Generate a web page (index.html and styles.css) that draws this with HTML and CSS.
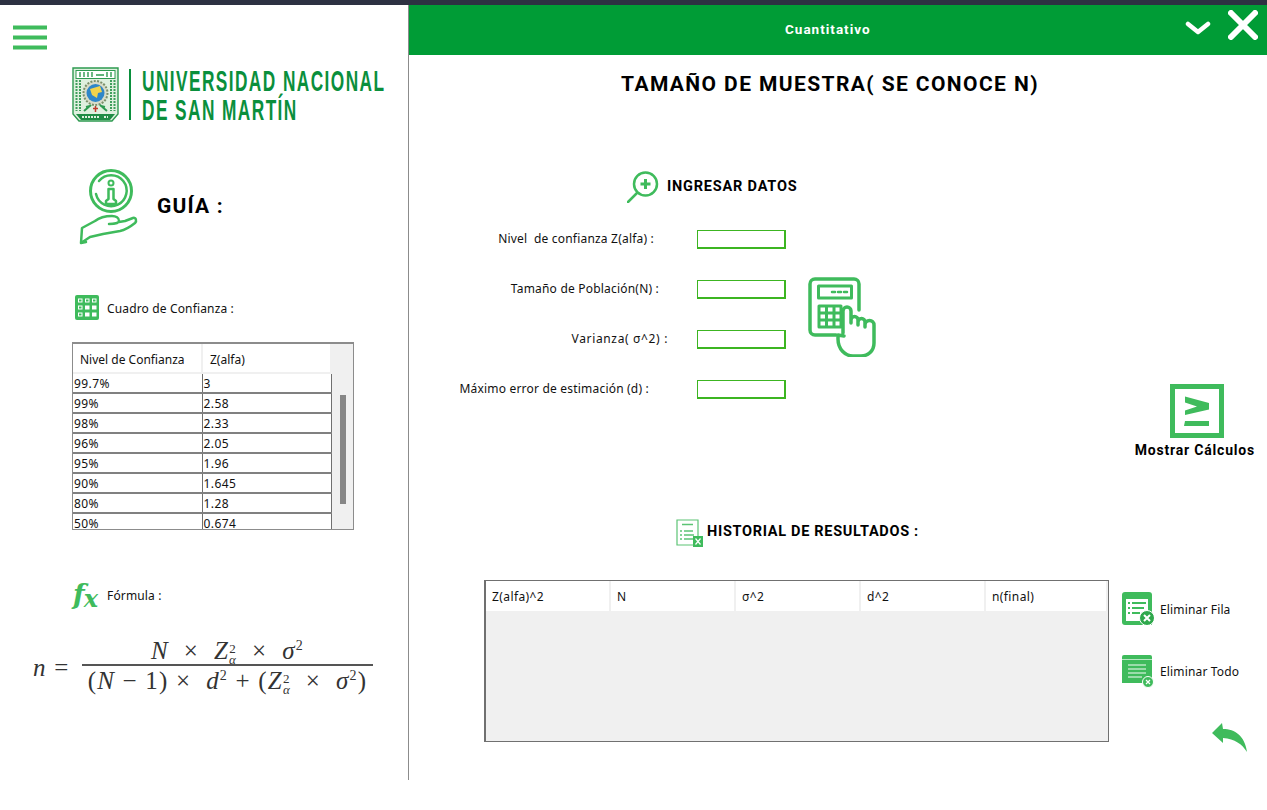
FILE: index.html
```html
<!DOCTYPE html>
<html lang="es">
<head>
    <meta charset="UTF-8">
    <meta name="viewport" content="width=device-width, initial-scale=1.0">
    <title>Cuantitativo</title>
    <link rel="stylesheet" href="styles.css">
</head>
<body>

<div class="top-strip"></div>

<div class="app">
    <aside class="sidebar">
        <svg class="menu-icon" viewBox="0 0 34 25" width="34" height="25">
            <rect y="0.500" width="34" height="4" fill="#3fbb5c"/>
            <rect y="10.500" width="34" height="4" fill="#3fbb5c"/>
            <rect y="20.500" width="34" height="4" fill="#3fbb5c"/>
        </svg>

        <div class="logo">
            <svg class="logo-shield" viewBox="0 0 47 55" width="47" height="55">
                <path d="M1 1H46V47L40 54H7L1 47Z" fill="#dff0df" stroke="#2e9a50" stroke-width="1.400"/>
                <rect x="4" y="3.500" width="39" height="8" fill="#fff" stroke="#2e9a50"/>
                <path d="M8 5v5M12 5v5M16 5v5M20 5v5M24 8h8M35 5v5M39 5v5" stroke="#2e9a50" stroke-width="1.400"/>
                <path d="M4.500 13v31M8 13v31M39 13v31M42.500 13v31" stroke="#3f9e5c" stroke-width="2" stroke-dasharray="2 1"/>
                <circle cx="23.500" cy="26" r="12" fill="#d8dcc8" stroke="#7b8f6a" stroke-width="2" stroke-dasharray="2 1.400"/>
                <circle cx="23.500" cy="26" r="9" fill="#2f86c8"/>
                <path d="M18 22l10-3 2 6-4 1-1 5-5-3z" fill="#f2d34a"/>
                <path d="M12 44l7-6M35 44l-7-6M14 40l4-1M33 40l-4-1" stroke="#2e9a50" stroke-width="2"/>
                <path d="M23.500 39v6M21 41.500h5" stroke="#c0392b" stroke-width="1.500"/>
                <path d="M4 47H43L38 53H9Z" fill="#1f8c45"/>
                <path d="M10 50h17M32 50h4" stroke="#dff0df" stroke-width="2" stroke-dasharray="2 1"/>
            </svg>
            <span class="logo-rule"></span>
            <div class="logo-text">
                <div class="logo-line">UNIVERSIDAD NACIONAL</div>
                <div class="logo-line">DE SAN MARTÍN</div>
            </div>
        </div>

        <div class="guide">
            <svg viewBox="0 0 60 76" width="60" height="76" fill="none" stroke="#3fbb5c" stroke-linecap="round" stroke-linejoin="round">
                <circle cx="33" cy="22" r="20.500" stroke-width="3"/>
                <path d="M21 12a15.500 15.500 0 1 1-3 13" stroke-width="2.500"/>
                <circle cx="33" cy="14" r="2.500" stroke-width="2"/>
                <path d="M30.500 20h5v10l2.500 2v3H28v-3l2.500-2z" stroke-width="2.500"/>
                <path d="M3 74L4 59 17 52C22 48 28 47 34 47 38 47 41 49 41 52 41 54 36 55 31 55M41 53L47 52 55 49C58 48 59 52 57 54 52 58 47 61 42 62L25 65 12 68 3 74M3 74l5-1" stroke-width="2.500"/>
            </svg>
            <span class="guide-title">GUÍA :</span>
        </div>

        <div class="caption caption-table">
            <svg viewBox="0 0 24 25" width="24" height="25">
                <rect width="24" height="25" rx="2" fill="#3fbb5c"/>
                <g fill="#fff">
                    <rect x="3" y="3.500" width="4.500" height="4"/><rect x="10" y="3.500" width="4.500" height="4"/><rect x="17" y="3.500" width="4.500" height="4"/>
                    <rect x="3" y="10.500" width="4.500" height="4"/><rect x="10" y="10.500" width="4.500" height="4"/><rect x="17" y="10.500" width="4.500" height="4"/>
                    <rect x="3" y="17.500" width="4.500" height="4"/><rect x="10" y="17.500" width="4.500" height="4"/><rect x="17" y="17.500" width="4.500" height="4"/>
                </g>
                <g fill="#3fbb5c">
                    <rect x="4" y="4.500" width="2.500" height="2"/><rect x="11" y="4.500" width="2.500" height="2"/><rect x="18" y="4.500" width="2.500" height="2"/>
                    <rect x="4" y="11.500" width="2.500" height="2"/><rect x="4" y="18.500" width="2.500" height="2"/>
                </g>
            </svg>
            <span class="caption-text">Cuadro de Confianza :</span>
        </div>

        <div class="conf-box">
            <div class="conf-scroll">
                <table class="conf-table">
                    <thead>
                        <tr><th>Nivel de Confianza</th><th>Z(alfa)</th></tr>
                    </thead>
                    <tbody>
                        <tr><td>99.7%</td><td>3</td></tr>
                        <tr><td>99%</td><td>2.58</td></tr>
                        <tr><td>98%</td><td>2.33</td></tr>
                        <tr><td>96%</td><td>2.05</td></tr>
                        <tr><td>95%</td><td>1.96</td></tr>
                        <tr><td>90%</td><td>1.645</td></tr>
                        <tr><td>80%</td><td>1.28</td></tr>
                        <tr><td>50%</td><td>0.674</td></tr>
                    </tbody>
                </table>
            </div>
            <div class="conf-bar"><div class="conf-thumb"></div></div>
        </div>

        <div class="caption caption-formula">
            <span class="fx-icon">f<sub>x</sub></span>
            <span>Fórmula :</span>
        </div>

        <div class="formula">
            <span class="formula-left"><i>n</i> =</span>
            <div class="fraction">
                <div class="numer"><i>N</i> &nbsp;× &nbsp;<i>Z</i><span class="supsub"><span>2</span><i>α</i></span> &nbsp;× &nbsp;<i>σ</i><sup>2</sup></div>
                <div class="denom">(<i>N</i> − 1) × &nbsp;<i>d</i><sup>2</sup> + (<i>Z</i><span class="supsub"><span>2</span><i>α</i></span> &nbsp;× &nbsp;<i>σ</i><sup>2</sup>)</div>
            </div>
        </div>
    </aside>

    <main class="main">
        <header class="main-header">
            <span class="main-header-title">Cuantitativo</span>
            <svg class="icon-chevron" viewBox="0 0 26 14" width="26" height="14" fill="none" stroke="#fff" stroke-width="4.500" stroke-linecap="round" stroke-linejoin="round">
                <path d="M3 3l10 8 10-8"/>
            </svg>
            <svg class="icon-close" viewBox="0 0 30 30" width="30" height="30" fill="none" stroke="#fff" stroke-width="6" stroke-linecap="round">
                <path d="M3 3l24 24M27 3L3 27"/>
            </svg>
        </header>

        <h1 class="page-title">TAMAÑO DE MUESTRA( SE CONOCE N)</h1>

        <div class="section-head head-data">
            <svg viewBox="0 0 32 32" width="32" height="32" fill="none" stroke="#3fbb5c" stroke-linecap="round">
                <circle cx="18.500" cy="13" r="11.500" stroke-width="2.500"/>
                <path d="M10 22L1 31" stroke-width="2.500"/>
                <path d="M18.500 8v10M13.500 13h10" stroke-width="3" stroke-linecap="butt"/>
            </svg>
            <span>INGRESAR DATOS</span>
        </div>

        <div class="data-area">
            <form class="data-form">
                <div class="field field-1"><label>Nivel&nbsp; de confianza Z(alfa) :</label><input type="text"></div>
                <div class="field field-2"><label>Tamaño de Población(N) :</label><input type="text"></div>
                <div class="field field-3"><label>Varianza( σ^2) :</label><input type="text"></div>
                <div class="field field-4"><label>Máximo error de estimación (d) :</label><input type="text"></div>
            </form>

            <svg class="calc-icon" viewBox="0 0 68 80" width="68" height="80" fill="none" stroke="#3fbb5c" stroke-linejoin="round" stroke-linecap="round">
                <path d="M28 58H7a5 5 0 0 1-5-5V7a5 5 0 0 1 5-5h39a5 5 0 0 1 5 5v26" stroke-width="3.500"/>
                <rect x="10.500" y="9" width="33" height="12" stroke-width="3"/>
                <path d="M24 15h3M30 15h3M36 15h3" stroke-width="2.500"/>
                <path d="M11 29h22v21H11zM18.500 29v21M26 29v21M11 36h22M11 43h22" stroke-width="3"/>
                <path d="M35 56V34a4 4 0 0 1 8 0v12-3a3.500 3.500 0 0 1 7 0v5-3a3.500 3.500 0 0 1 7 0v5-2a4 4 0 0 1 9 0v18c0 8-6 13-13 13h-8c-8 0-15-7-15-17v-4l6 1" fill="#fff" stroke-width="3.500"/>
            </svg>

            <div class="show-calc">
                <svg viewBox="0 0 54 54" width="54" height="54">
                    <rect x="2.500" y="2.500" width="49" height="49" fill="none" stroke="#3fbb5c" stroke-width="5"/>
                    <path d="M15 12.500l24 6.500v6.500l-24 5.500v-4.500l12-4-12-4z" fill="#3fbb5c"/>
                    <path d="M15 37h24v5H14z" fill="#3fbb5c"/>
                </svg>
                <span>Mostrar Cálculos</span>
            </div>
        </div>

        <div class="section-head head-history">
            <svg viewBox="0 0 27 29" width="27" height="29" fill="none" stroke="#5cc475">
                <path d="M1 1h21v25H1z" fill="#fff" stroke-width="1.200"/>
                <path d="M6 5.500h11M4 12h2M8 12h9M4 16h2M8 16h10M4 20h2M8 20h10" stroke-width="1.500"/>
                <rect x="17" y="17" width="10" height="11" fill="#3fbb5c" stroke="none"/>
                <path d="M19.500 19.500l5 6M24.500 19.500l-5 6" stroke="#fff" stroke-width="1.200"/>
            </svg>
            <span>HISTORIAL DE RESULTADOS :</span>
        </div>

        <div class="results-area">
            <div class="results-box">
                <div class="results-head">
                    <div>Z(alfa)^2</div>
                    <div>N</div>
                    <div>σ^2</div>
                    <div>d^2</div>
                    <div>n(final)</div>
                </div>
            </div>

            <div class="results-actions">
                <div class="action action-row">
                    <svg viewBox="0 0 32 33" width="32" height="33">
                        <path d="M3 0h24a3 3 0 0 1 3 3v30H3a3 3 0 0 1-3-3V3a3 3 0 0 1 3-3z" fill="#3fbb5c"/>
                        <path d="M4 7h22v22H4z" fill="#fff"/>
                        <path d="M10 11h14M10 16h12M10 21h8M6 11h2M6 16h2M6 21h2" stroke="#3fbb5c" stroke-width="2"/>
                        <circle cx="25" cy="26" r="7.500" fill="#2fa84c" stroke="#fff"/>
                        <path d="M22 23l6 6M28 23l-6 6" stroke="#fff" stroke-width="2"/>
                    </svg>
                    <span>Eliminar Fila</span>
                </div>
                <div class="action action-all">
                    <svg viewBox="0 0 32 33" width="32" height="33">
                        <path d="M2 0h26a2 2 0 0 1 2 2v26H0V2a2 2 0 0 1 2-2z" fill="#3fbb5c"/>
                        <path d="M6 10h18M6 14h18M6 18h18M6 22h14" stroke="#b9e8c4" stroke-width="1.600"/>
                        <rect y="4" width="30" height="1" fill="#b9e8c4"/>
                        <circle cx="26" cy="27" r="5.500" fill="#3fbb5c" stroke="#fff"/>
                        <path d="M24 25l4 4M28 25l-4 4" stroke="#fff" stroke-width="1.200"/>
                    </svg>
                    <span>Eliminar Todo</span>
                </div>
                <svg class="back-icon" viewBox="0 0 35 30" width="35" height="30">
                    <path d="M0 11L10 1l1 6C23 7 33 14 35 30 30 22 23 17 11 16l0 5z" fill="#3fbb5c"/>
                </svg>
            </div>
        </div>
    </main>
</div>

</body>
</html>
```

FILE: styles.css
```css
/* Algemeen */
* {
    box-sizing: border-box;
}

body {
    margin: 0;
    height: 810px;
    overflow: hidden;
    background-color: white;
    color: #111;
    font-family: "Noto Sans", sans-serif;
    font-size: 12px;
}

.top-strip {
    height: 5px;
    background-color: #2d3142;
}

.app {
    display: flex;
    height: 775px;
}

/* Zijbalk */
.sidebar {
    width: 409px;
    flex-shrink: 0;
    border-right: 1px solid #8c8c8c;
}

.menu-icon {
    display: block;
    margin: 20px 0 0 13px;
}

.logo {
    display: flex;
    align-items: center;
    height: 55px;
    margin: 17px 0 0 72px;
}

.logo-shield {
    flex-shrink: 0;
}

.logo-rule {
    flex-shrink: 0;
    width: 2px;
    height: 51px;
    margin: 0 11px 0 10px;
    background-color: #0a8f3c;
}

.logo-text {
    width: 242px;
    flex-shrink: 0;
    color: #0a8f3c;
    font-family: "Liberation Sans", sans-serif;
    font-size: 30px;
    font-weight: bold;
    line-height: 29px;
    letter-spacing: 2.5px;
    white-space: nowrap;
}

/* smalle letters van het logo */
.logo-line {
    transform: scaleX(0.575);
    transform-origin: left center;
}

.guide {
    display: flex;
    align-items: center;
    gap: 20px;
    margin: 47px 0 0 78px;
}

.guide svg {
    display: block;
}

.guide-title {
    margin: 0 0 2px -1px;
    color: #000;
    font-family: Roboto, sans-serif;
    font-size: 21px;
    font-weight: bold;
    letter-spacing: 1.2px;
}

.caption {
    display: flex;
    align-items: center;
    letter-spacing: 0.15px;
}

.caption-text {
    margin-top: 2px;
}

.caption-table {
    gap: 8px;
    margin: 50px 0 0 75px;
}

.caption-formula {
    gap: 6px;
    height: 24px;
    margin: 53px 0 0 73px;
}

/* Tabel betrouwbaarheid */
.conf-box {
    display: flex;
    width: 282px;
    height: 188px;
    margin: 22px 0 0 72px;
    border: 2px solid #8c8c8c;
    border-width: 2px 1px 1px 1px;
}

.conf-scroll {
    width: 259px;
    overflow: hidden;
}

.conf-table {
    width: 259px;
    table-layout: fixed;
    border-collapse: collapse;
}

.conf-table th {
    height: 29px;
    padding: 3px 0 0 7px;
    border-right: 2px solid #f0f0f0;
    border-bottom: 2px solid #f0f0f0;
    font-weight: normal;
    text-align: left;
}

.conf-table td {
    height: 20px;
    padding: 1px 0 0 1px;
    border-right: 1px solid #707070;
    border-bottom: 2px solid #808080;
    line-height: 17px;
    letter-spacing: 0.4px;
}

.conf-table th:first-child,
.conf-table td:first-child {
    width: 129px;
}

.conf-bar {
    flex: 1;
    padding: 51px 0 0 8px;
    background-color: #f0f0f0;
}

.conf-thumb {
    width: 6px;
    height: 109px;
    background-color: #868686;
}

/* Formule */
.fx-icon {
    width: 28px;
    color: #3fbb5c;
    font-family: "DejaVu Serif", serif;
    font-size: 27px;
    font-style: italic;
    font-weight: bold;
    line-height: 24px;
    letter-spacing: -1px;
    white-space: nowrap;
}

.fx-icon sub {
    font-size: 24px;
    line-height: 0;
    vertical-align: -3px;
}

.formula {
    display: flex;
    align-items: center;
    margin: 33px 0 0 33px;
    color: #333;
    font-family: "Liberation Serif", serif;
    font-size: 25px;
    letter-spacing: 1.2px;
    white-space: nowrap;
}

.formula-left {
    width: 49px;
}

.fraction {
    width: 291px;
    text-align: center;
}

.numer {
    height: 26px;
    line-height: 21px;
    border-bottom: 2px solid #555;
}

.denom {
    height: 30px;
    line-height: 30px;
}

.formula sup {
    font-size: 14px;
    line-height: 0;
}

.supsub {
    display: inline-flex;
    flex-direction: column;
    font-size: 13px;
    line-height: 11px;
    vertical-align: 6px;
}

/* Hoofdpaneel */
.main {
    flex: 1;
    min-width: 0;
}

.main-header {
    display: flex;
    align-items: center;
    height: 50px;
    padding-left: 376px;
    background-color: #009c36;
    color: white;
}

.main-header-title {
    width: 87px;
    margin-bottom: 2px;
    font-family: Roboto, sans-serif;
    font-size: 13.500px;
    font-weight: bold;
    letter-spacing: 1px;
    white-space: nowrap;
}

.icon-chevron {
    margin: -4px 0 0 313px;
}

.icon-close {
    margin: -10px 0 0 17px;
}

.page-title {
    height: 28px;
    margin: 15px 0 0 0;
    padding-right: 16px;
    color: #000;
    font-family: Roboto, sans-serif;
    font-size: 21px;
    font-weight: bold;
    line-height: 28px;
    letter-spacing: 1.4px;
    text-align: center;
}

.section-head {
    display: flex;
    align-items: center;
    color: #000;
    font-family: Roboto, sans-serif;
    font-size: 14.500px;
    font-weight: bold;
    letter-spacing: 0.8px;
}

.section-head span {
    margin-bottom: 2px;
}

.head-data {
    gap: 8px;
    margin: 73px 0 0 218px;
}

.head-history {
    gap: 4px;
    height: 29px;
    margin: 61px 0 0 267px;
    letter-spacing: 0.7px;
}

.head-history span {
    margin-bottom: 4px;
}

/* Formulier */
.data-area {
    display: flex;
    height: 228px;
    margin-top: 27px;
}

.data-form {
    display: flex;
    flex-direction: column;
    gap: 31px;
    width: 377px;
}

.field {
    display: flex;
    align-items: center;
    justify-content: flex-end;
    height: 19px;
}

.field label {
    margin-bottom: 2px;
    letter-spacing: 0.2px;
    white-space: nowrap;
}

.field input {
    width: 89px;
    height: 19px;
    border: 2px solid #3cb521;
    border-width: 1px 2px 2px 1px;
    background-color: white;
}

.field-1 label {
    margin-right: 43px;
}

.field-2 label {
    margin-right: 38px;
}

.field-3 label {
    margin-right: 29px;
    letter-spacing: 0.65px;
}

.field-4 label {
    margin-right: 48px;
}

.calc-icon {
    margin: 47px 0 0 22px;
}

.show-calc {
    display: flex;
    flex-direction: column;
    align-items: center;
    gap: 4px;
    margin: 154px 12px 0 auto;
    color: #000;
    font-family: Roboto, sans-serif;
    font-size: 14px;
    font-weight: bold;
    letter-spacing: 0.8px;
    white-space: nowrap;
}

.show-calc svg {
    margin-left: 4px;
}

/* Resultaten */
.results-area {
    display: flex;
    margin: 32px 0 0 75px;
}

.results-box {
    width: 625px;
    height: 162px;
    border: 1px solid #707070;
    border-width: 1px 1px 1px 2px;
    background-color: #f0f0f0;
}

.results-head {
    display: grid;
    grid-template-columns: repeat(4, 125px) 1fr;
    height: 30px;
}

.results-head div {
    display: flex;
    align-items: center;
    padding-left: 6px;
    background-color: white;
    border-right: 2px solid #f0f0f0;
    letter-spacing: 0.4px;
}

.results-actions {
    margin-left: 13px;
}

.action {
    display: flex;
    align-items: center;
    gap: 6px;
    letter-spacing: 0.15px;
}

.action-row {
    margin-top: 12px;
}

.action-row span {
    margin-top: 2px;
}

.action-all {
    margin-top: 30px;
}

.back-icon {
    display: block;
    margin: 34px 0 0 90px;
}
```
